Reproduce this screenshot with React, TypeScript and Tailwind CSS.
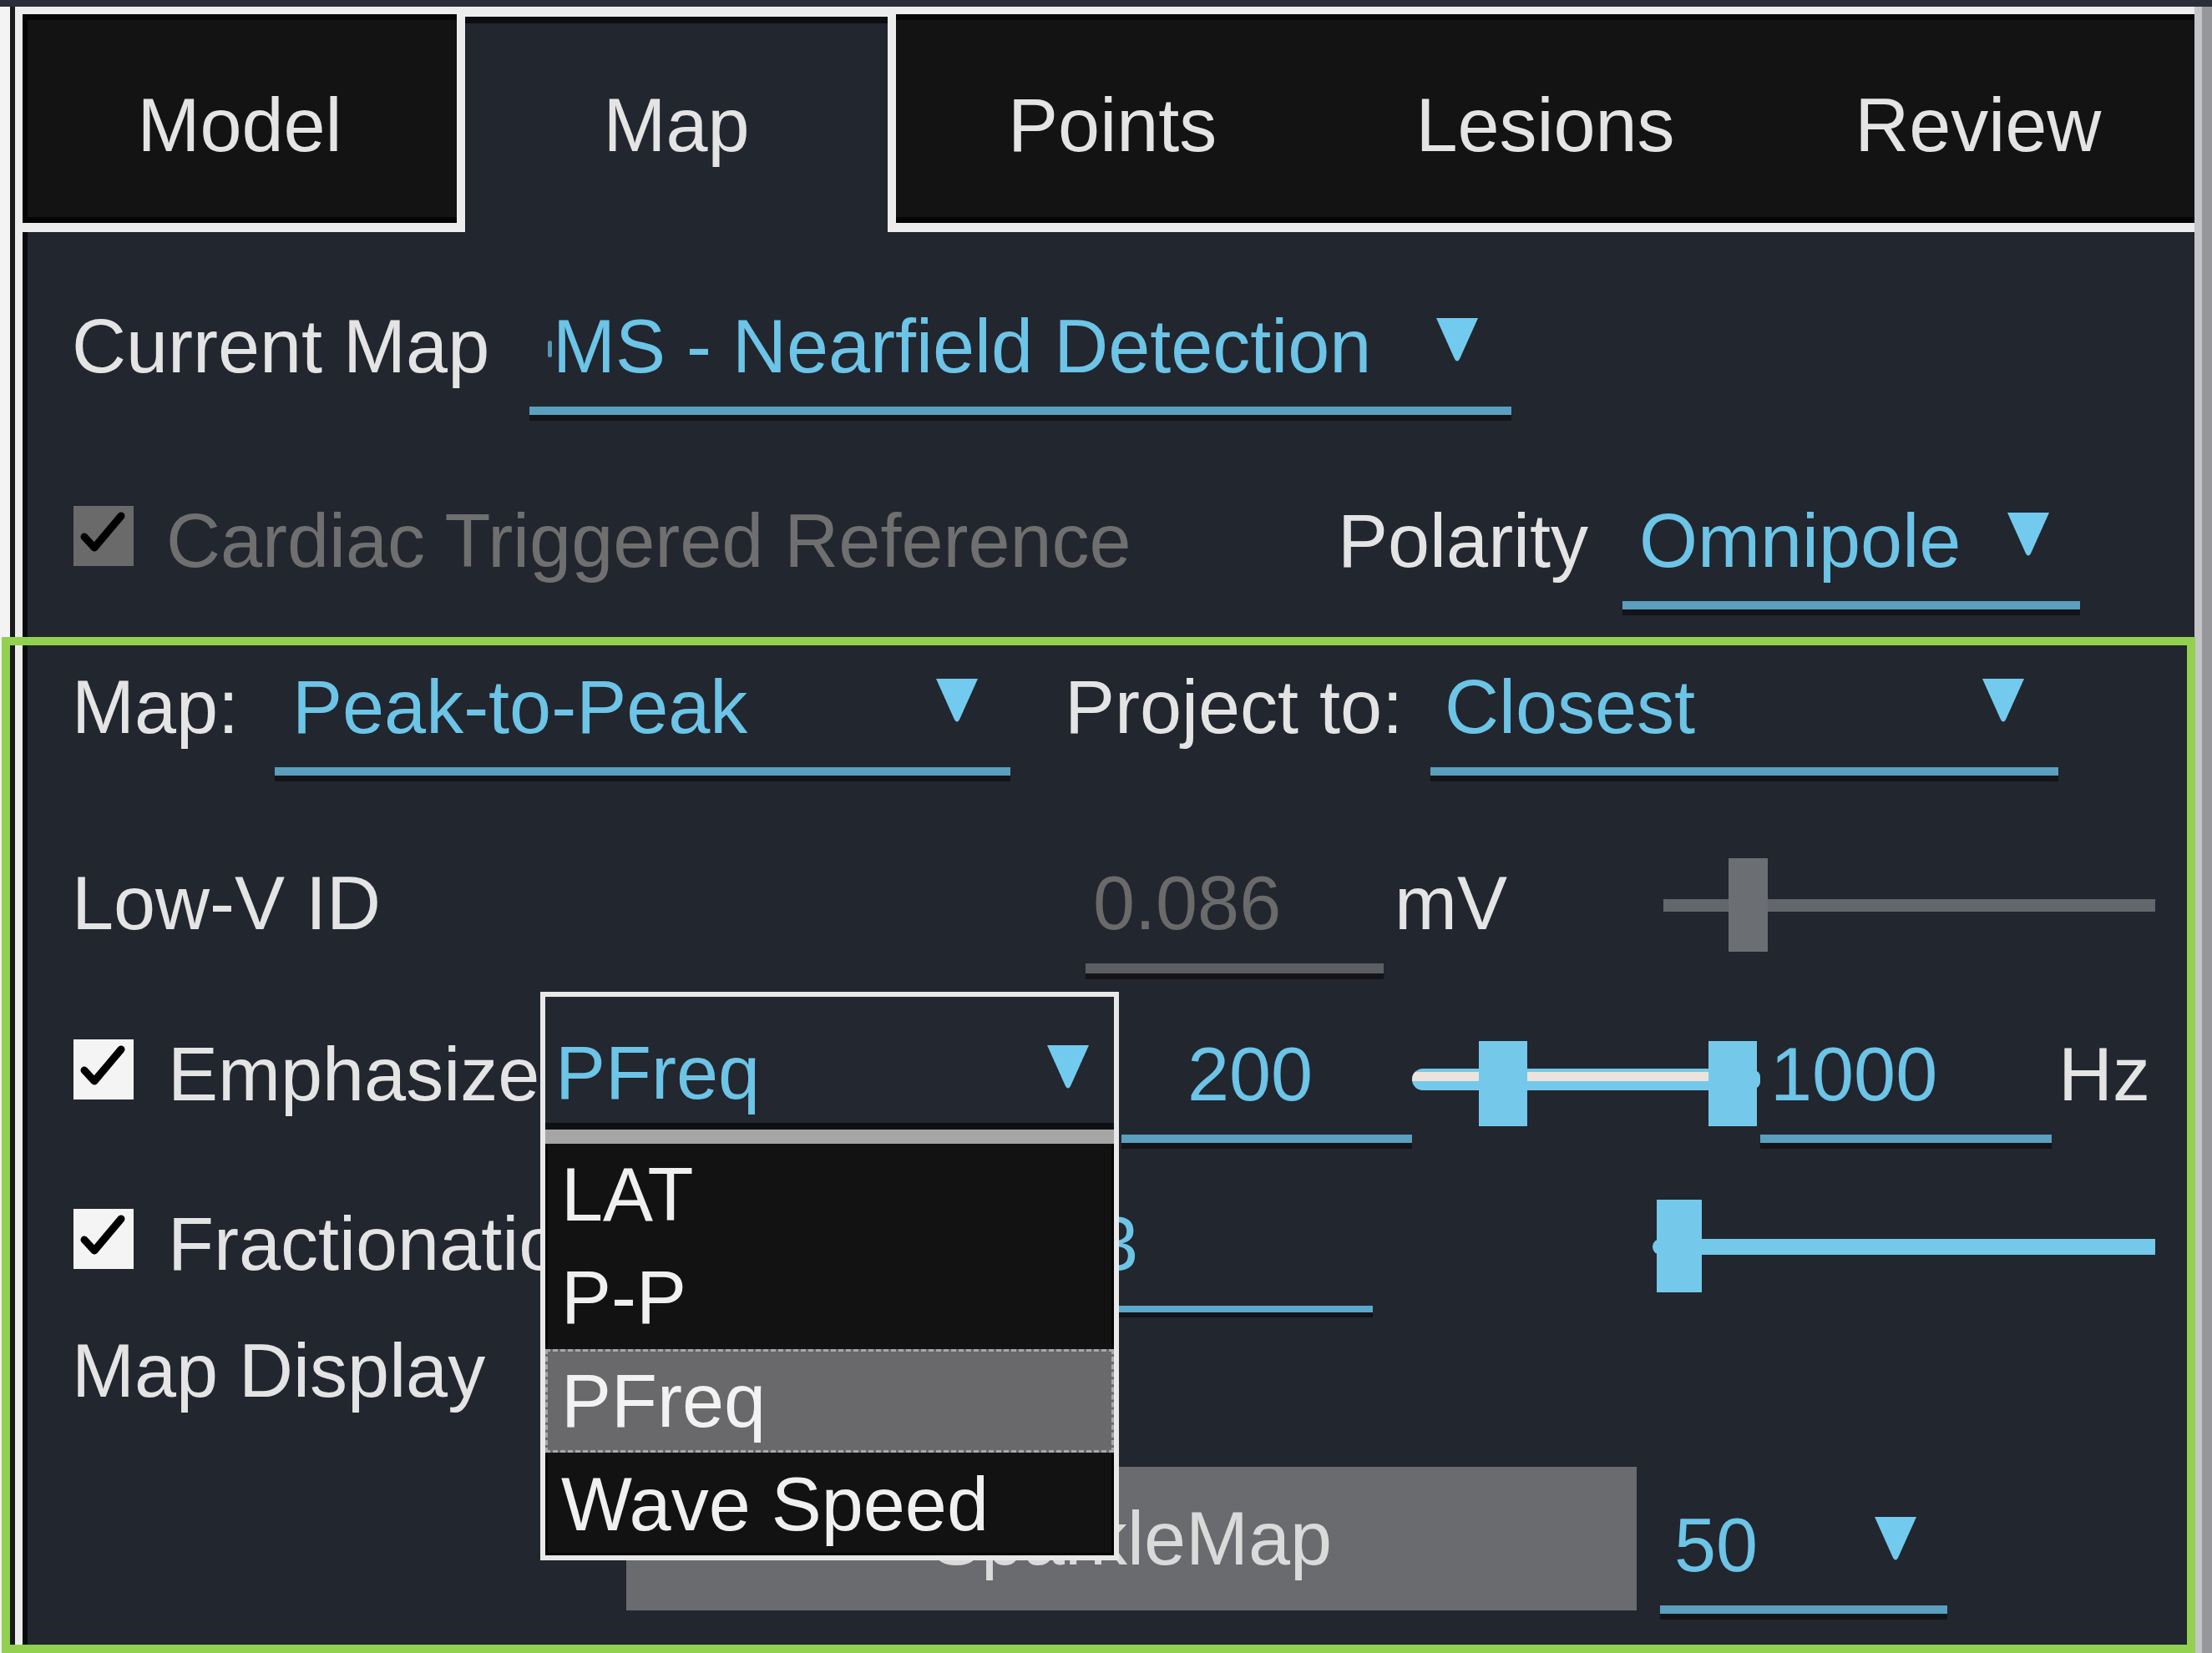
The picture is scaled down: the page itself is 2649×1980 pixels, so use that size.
import React from 'react';

const cyan = 'text-[#6cc4e6]';

function Arrow({ className = 'mt-[8px]' }: { className?: string }) {
  return (
    <svg width="56" height="56" viewBox="0 0 56 56" className={`shrink-0 ${className}`}>
      <path d="M3 3 H53 L31 52 Q28 57 25 52 Z" fill="#72cbee" />
    </svg>
  );
}

function Check({ disabled = false }: { disabled?: boolean }) {
  return (
    <div
      className={`w-[72px] h-[72px] shrink-0 mt-[3px] ${
        disabled ? 'bg-[#6a6a6a]' : 'bg-[#f4f4f4]'
      }`}
    >
      <svg viewBox="0 0 72 72" className="w-[72px] h-[72px]">
        <path
          d="M13 37 L25 50 L57 12"
          fill="none"
          stroke="#000"
          strokeWidth="9"
          strokeLinecap="round"
          strokeLinejoin="round"
        />
      </svg>
    </div>
  );
}

function Field({
  width,
  pad,
  line = 'bg-[#5a9fbd]',
  lineClass = 'h-[10px]',
  children,
}: {
  width: string;
  pad: string;
  line?: string;
  lineClass?: string;
  children: React.ReactNode;
}) {
  return (
    <div className={`flex flex-col shrink-0 ${width}`}>
      <div className={`h-[90px] flex items-start justify-between whitespace-nowrap ${pad}`}>
        {children}
      </div>
      <div className={`mt-[27px] ${lineClass} ${line} shadow-[0_7px_0_#121419]`} />
    </div>
  );
}

export default function App() {
  return (
    <div className="relative w-[2649px] h-[1980px] overflow-hidden bg-[#f2f2f2] font-['Liberation_Sans',Arial,sans-serif] text-[90px] leading-[90px] text-[#e4e4e4]">
      <div className="h-[8px] bg-[#2a2e38]" />
      <div className="flex h-[1972px]">
        <div className="w-[18px] shrink-0 bg-[#f3f3f3] border-r-[6px] border-[#1a1a1a]" />

        <div className="w-[2610px] shrink-0 flex flex-col">
          {/* Tabs */}
          <div className="flex h-[270px] shrink-0">
            <div className="w-[539px] shrink-0 border-[#ececec] border-t-[9px] border-l-[9px] border-r-[10px] border-b-[11px] bg-[#131313] shadow-[inset_0_7px_0_#050505,inset_0_-7px_0_#050505,inset_6px_0_0_#050505] flex items-center justify-center pt-[16px]">
              Model
            </div>
            <div className="w-[516px] shrink-0 border-[#ececec] border-t-[12px] border-r-[10px] bg-[#22262f] shadow-[inset_0_8px_0_#0c0d10] flex items-center justify-center pt-[2px]">
              Map
            </div>
            <div className="flex-1 border-[#ececec] border-t-[9px] border-b-[11px] bg-[#131313] shadow-[inset_0_7px_0_#050505,inset_0_-7px_0_#050505] grid grid-cols-3 items-center pt-[16px] text-center">
              <span>Points</span>
              <span>Lesions</span>
              <span>Review</span>
            </div>
          </div>

          {/* Body */}
          <div className="flex-1 bg-[#22262f] border-l-[9px] border-[#ececec] shadow-[inset_6px_0_0_#0b0b0b] pl-[59px] pt-[92px] flex flex-col">
            {/* Current Map */}
            <div className="flex items-start">
              <div className="w-[548px] shrink-0 whitespace-nowrap">Current Map</div>
              <Field width="w-[1176px]" pad="pl-[22px] pr-[37px]">
                <span className="flex items-start">
                  <span className="w-[5px] h-[20px] mt-[38px] rounded-full bg-[#6cc4e6] opacity-70" />
                  <span className={`ml-[1px] ${cyan}`}>MS - Nearfield Detection</span>
                </span>
                <Arrow />
              </Field>
            </div>

            {/* Cardiac / Polarity */}
            <div className="flex items-start mt-[106px]">
              <div className="w-[1516px] shrink-0 flex items-start">
                <div className="ml-[2px]">
                  <Check disabled />
                </div>
                <span className="ml-[39px] text-[#6f6f6f] whitespace-nowrap">Cardiac Triggered Reference</span>
              </div>
              <div className="w-[341px] shrink-0">Polarity</div>
              <Field width="w-[548px]" pad="pl-[20px] pr-[34px]">
                <span className={cyan}>Omnipole</span>
                <Arrow />
              </Field>
            </div>

            {/* Map / Project to */}
            <div className="flex items-start mt-[72px]">
              <div className="w-[243px] shrink-0">Map:</div>
              <Field width="w-[881px]" pad="pl-[21px] pr-[36px]">
                <span className={cyan}>Peak-to-Peak</span>
                <Arrow />
              </Field>
              <div className="ml-[65px] w-[438px] shrink-0 whitespace-nowrap">Project to:</div>
              <Field width="w-[752px]" pad="pl-[17px] pr-[38px]">
                <span className={cyan}>Closest</span>
                <Arrow />
              </Field>
            </div>

            {/* Low-V ID */}
            <div className="flex items-start mt-[108px]">
              <div className="w-[1214px] shrink-0 whitespace-nowrap">Low-V ID</div>
              <Field width="w-[357px]" pad="pl-[9px]" line="bg-[#5b5e63]" lineClass="h-[12px]">
                <span className="text-[#6a6a6a]">0.086</span>
              </Field>
              <div className="ml-[13px] w-[322px] shrink-0">mV</div>
              <div className="relative w-[589px] h-[112px] -mt-[9px] shrink-0">
                <div className="absolute left-0 right-0 top-[49px] h-[15px] bg-[#63666b]" />
                <div className="absolute left-[78px] top-0 w-[47px] h-[112px] bg-[#6b6e72]" />
              </div>
            </div>

            {/* Emphasize */}
            <div className="flex items-start mt-[76px]">
              <div className="w-[1257px] shrink-0 flex items-start">
                <div className="ml-[2px]">
                  <Check />
                </div>
                <span className="ml-[41px] whitespace-nowrap">Emphasize</span>
              </div>
              <Field width="w-[348px]" pad="pl-[79px]">
                <span className={cyan}>200</span>
              </Field>
              <div className="relative w-[417px] h-[102px] mt-[5px] shrink-0">
                <div className="absolute left-0 right-[4px] top-[33px] h-[26px] rounded-l-full bg-[#74c9ea] overflow-hidden">
                  <div className="mt-[4px] h-[11px] bg-[#ece3dc]" />
                </div>
                <div className="absolute right-0 top-[35px] w-[16px] h-[22px] rounded-full bg-[#74c9ea]" />
                <div className="absolute left-[80px] top-0 w-[58px] h-[102px] bg-[#74c9ea]" />
                <div className="absolute left-[355px] top-0 w-[58px] h-[102px] bg-[#74c9ea]" />
              </div>
              <Field width="w-[349px]" pad="pl-[12px]">
                <span className={cyan}>1000</span>
              </Field>
              <div className="ml-[8px] shrink-0">Hz</div>
            </div>

            {/* Fractionation */}
            <div className="flex items-start mt-[76px]">
              <div className="w-[1227px] shrink-0 flex items-start">
                <div className="ml-[2px]">
                  <Check />
                </div>
                <span className="ml-[41px] whitespace-nowrap">Fractionation</span>
              </div>
              <div className="flex flex-col w-[331px] shrink-0">
                <div className={`h-[90px] ${cyan}`}>3</div>
                <div className="mt-[29px] ml-[26px] h-[8px] bg-[#5aa9cb] shadow-[0_6px_0_#121419]" />
              </div>
              <div className="relative ml-[335px] w-[602px] h-[111px] -mt-[8px] shrink-0">
                <div className="absolute left-0 right-0 top-[47px] h-[19px] rounded-l-full bg-[#74c9ea]" />
                <div className="absolute left-[5px] top-0 w-[54px] h-[111px] bg-[#74c9ea]" />
              </div>
            </div>

            {/* Map Display */}
            <div className="flex items-start mt-[25px]">
              <div className="whitespace-nowrap">Map Display</div>
            </div>

            {/* SparkleMap */}
            <div className="flex items-start mt-[70px]">
              <div className="ml-[664px] w-[1210px] h-[172px] shrink-0 bg-[#6a6b6e] flex items-center justify-center text-[#dadada] whitespace-nowrap">
                SparkleMap
              </div>
              <div className="ml-[28px] mt-[49px]">
                <Field width="w-[344px]" pad="pl-[17px] pr-[34px]">
                  <span className={cyan}>50</span>
                  <Arrow />
                </Field>
              </div>
            </div>
          </div>
        </div>

        <div className="flex-1 bg-[#95979b] border-l-[9px] border-[#c4c5c9]" />
      </div>

      {/* Open dropdown list */}
      <div className="absolute left-[647px] top-[1188px] w-[693px] h-[681px] border-[6px] border-[#e8e8e8] bg-[#121212] shadow-[inset_0_0_0_3px_#050505] flex flex-col">
        <div className="h-[159px] shrink-0 bg-[#23272f] shadow-[inset_0_-8px_0_#0e1014] flex justify-between items-start pl-[12px] pr-[27px]">
          <span className={`mt-[46px] ${cyan}`}>PFreq</span>
          <Arrow className="mt-[55px]" />
        </div>
        <div className="h-[17px] shrink-0 bg-[#a6a6a6]" />
        <div className="h-[122px] shrink-0 flex items-center pl-[19px] text-[#f0f0f0]">LAT</div>
        <div className="h-[124px] shrink-0 flex items-center pl-[19px] text-[#f0f0f0]">P-P</div>
        <div className="h-[124px] shrink-0 flex items-center pl-[16px] text-[#f2f2f2] bg-[#69696b] border-[3px] border-dashed border-[#a8a8a8]">
          PFreq
        </div>
        <div className="flex-1 flex items-center pl-[19px] text-[#f0f0f0] whitespace-nowrap">Wave Speed</div>
      </div>

      {/* Highlight frame */}
      <div className="absolute left-[2px] top-[763px] w-[2627px] h-[1217px] border-[10px] border-[#92d050]" />
    </div>
  );
}
